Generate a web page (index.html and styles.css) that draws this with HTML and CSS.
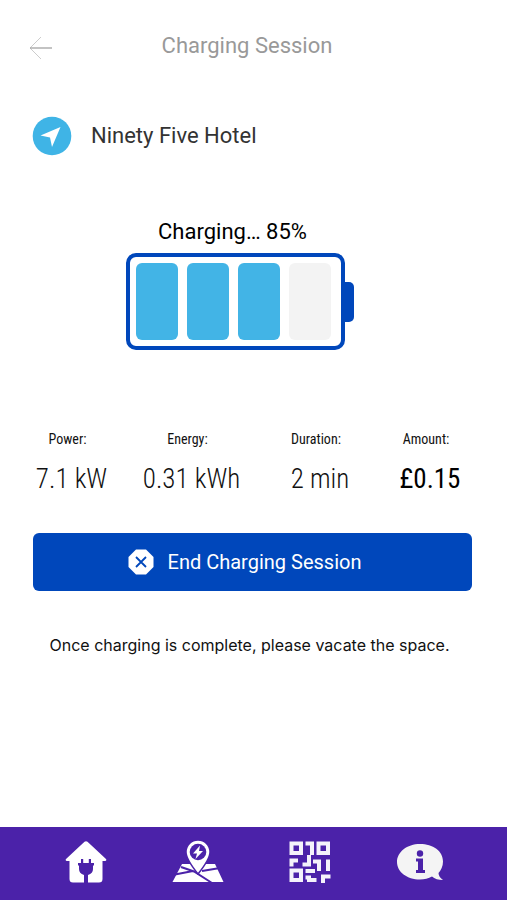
FILE: index.html
```html
<!DOCTYPE html>
<html lang="en">
<head>
<meta charset="utf-8">
<meta name="viewport" content="width=device-width, initial-scale=1">
<title>Charging Session</title>
<link rel="stylesheet" href="styles.css">
</head>
<body>
<header class="topbar">
  <button class="back" type="button" aria-label="Back">
    <svg width="24" height="24" viewBox="0 0 24 24" fill="none" stroke="currentColor"><path d="M12 1 1 12l11 11" stroke-width="1" opacity=".6"/><path d="M1 12h22" stroke-width="1.4"/></svg>
  </button>
  <h1 class="title">Charging Session</h1>
</header>
<main class="content">
  <section class="location">
    <svg class="pin" width="40" height="40" viewBox="0 0 40 40"><circle cx="20" cy="20" r="19.3" fill="#3fb4e6"/><path d="M28.500 11 8.500 19.500l9.500 2 2 9.500z" fill="#fff"/></svg>
    <h2 class="place">Ninety Five Hotel</h2>
  </section>
  <section class="status">
    <p class="status-text">Charging… 85%</p>
    <div class="battery">
      <div class="shell"><span class="cell full"></span><span class="cell full"></span><span class="cell full"></span><span class="cell"></span></div>
      <span class="cap"></span>
    </div>
  </section>
  <dl class="stats">
    <div class="stat"><dt>Power:</dt><dd>7.1 kW</dd></div>
    <div class="stat"><dt>Energy:</dt><dd>0.31 kWh</dd></div>
    <div class="stat"><dt>Duration:</dt><dd>2 min</dd></div>
    <div class="stat"><dt>Amount:</dt><dd class="amount">£0.15</dd></div>
  </dl>
  <button class="end" type="button">
    <svg width="26" height="26" viewBox="0 0 26 26"><path d="M8 .5h10L25.500 8v10L18 25.500H8L.5 18V8z" fill="#fff"/><path d="m8 8 10 10m0-10L8 18" stroke="#0047bb" stroke-width="1.800"/></svg>
    <span>End Charging Session</span>
  </button>
  <p class="note">Once charging is complete, please vacate the space.</p>
</main>
<nav class="tabs" aria-label="Main">
  <a href="#home" aria-label="Home"><svg width="42" height="42" viewBox="0 0 42 42"><path d="M19.500.8q1.500-1.200 3 0L41 18q1 2-1 2h-2.500v18q0 3.500-3.500 3.500H8q-3.500 0-3.500-3.500V20H2q-2 0-1-2z" fill="#fff"/><path d="M16 18h2.200v4h5.600v-4H26v4h3v2.500h-1V28q0 4.500-5 6v8h-4v-8q-5-1.500-5-6v-3.500h-1V22h3z" fill="#4b22a9"/></svg></a>
  <a href="#map" aria-label="Charger map"><svg width="52" height="44" viewBox="0 0 52 44"><path d="M10 24h33l8.500 18H.5z" fill="#fff"/><path d="m9 27 13 4.500L40 43M3 34.500l18-3.500M30 31l18-3" fill="none" stroke="#4b22a9" stroke-width="2"/><path d="M26 34Q14 19 14 12a12 12 0 0 1 24 0q0 7-12 22z" fill="#fff" stroke="#4b22a9" stroke-width="1.500"/><circle cx="26" cy="12" r="8.300" fill="#4b22a9"/><path d="m28 5.500-7 8h4l-1.500 5.500 7.500-8h-4z" fill="#fff"/></svg></a>
  <a href="#scan" aria-label="Scan code"><svg width="42" height="42" viewBox="0 0 42 42" fill="none" stroke="#f4f2fb" stroke-width="4"><path d="M2.500 2.500h9.500v9.500h-9.500zM29.500 2.500h9.500v9.500h-9.500zM2.500 29.500h9.500v9.500h-9.500zM16.500 2.500H23V14M2.500 25.500v-6H9M20 14v9.500h-6.500M24 20.500h6V30M39 18.500V30M16.500 30H26M16.500 36.500H20V39h7.500M34 42v-6.500h7.500"/></svg></a>
  <a href="#info" aria-label="Information"><svg width="48" height="38" viewBox="0 0 48 38"><path d="M24 1c13 0 23 7 23 17.500 0 5-2 8.500-4.500 11.500 0 3 2 5 4.500 7-4.500 0-8.500-1-11-3.500-3.500 2-7.500 3-12 3C11 36.500 1 29 1 19S11 1 24 1z" fill="#f4f4f4"/><circle cx="24" cy="10.500" r="3.200" fill="#4b22a9"/><path d="M20 15.500h7V27h2v3h-9v-3h2v-8.500h-2z" fill="#4b22a9"/></svg></a>
</nav>
</body>
</html>
```
FILE: styles.css
```css
* { box-sizing: border-box; }
body {
  margin: 0;
  min-height: 100vh;
  display: flex;
  flex-direction: column;
  background: #fff;
  color: #111;
  font-family: Roboto, sans-serif;
}
h1, h2, p, dl, dd { margin: 0; font-weight: 400; }
button { border: 0; font: inherit; cursor: pointer; }
svg { display: block; flex: none; }

.topbar {
  display: grid;
  grid-template-columns: 40px 1fr 40px;
  align-items: center;
  padding: 31px 42px 0 29px;
}
.back { padding: 4px 0 0; background: none; color: #aaa; }
.title { text-align: center; font-size: 22px; line-height: 30px; color: #999; }

.content { flex: 1; padding: 0 35px 0 33px; }
.location { display: flex; align-items: center; gap: 19px; margin-top: 55px; }
.pin { margin-left: -1px; }
.place { font-size: 22px; line-height: 30px; color: #333; }

.status { display: flex; flex-direction: column; align-items: center; margin-top: 61px; }
.status-text { padding-right: 40px; font-size: 22px; line-height: 30px; color: #000; }
.battery { display: flex; align-items: center; margin-top: 6px; padding-right: 26px; }
.shell {
  display: flex;
  gap: 9px;
  padding: 6px 10px 6px 6px;
  border: 4px solid #0047bb;
  border-radius: 10px;
}
.cell { width: 42px; height: 77px; border-radius: 6px; background: #f3f3f3; }
.full { background: #42b4e6; }
.cap { width: 9px; height: 40px; background: #0047bb; border-radius: 0 5px 5px 0; }

.stats {
  display: grid;
  grid-template-columns: 119fr 121fr 136fr 84fr;
  margin: 78px 0 0 -21px;
  font-family: "Roboto Condensed", Roboto, sans-serif;
  text-align: center;
}
.stat dt { padding-right: 8px; font-size: 14px; line-height: 22px; }
.stat dd { margin-top: 11px; font-size: 27px; line-height: 36px; font-weight: 300; }
.stat .amount { font-weight: 400; color: #000; }

.end {
  display: flex;
  align-items: center;
  justify-content: center;
  gap: 14px;
  width: 100%;
  height: 58px;
  margin-top: 36px;
  padding: 0 16px 0 0;
  border-radius: 6px;
  background: #0047bb;
  color: #fff;
  font-size: 20px;
}
.note { margin-top: 42px; padding-right: 6px; text-align: center; font-family: Inter, sans-serif; font-size: 16px; line-height: 24px; }

.tabs {
  display: flex;
  justify-content: space-between;
  align-items: center;
  height: 73px;
  padding: 0 63px 3px 65px;
  background: #4b22a9;
}
```
